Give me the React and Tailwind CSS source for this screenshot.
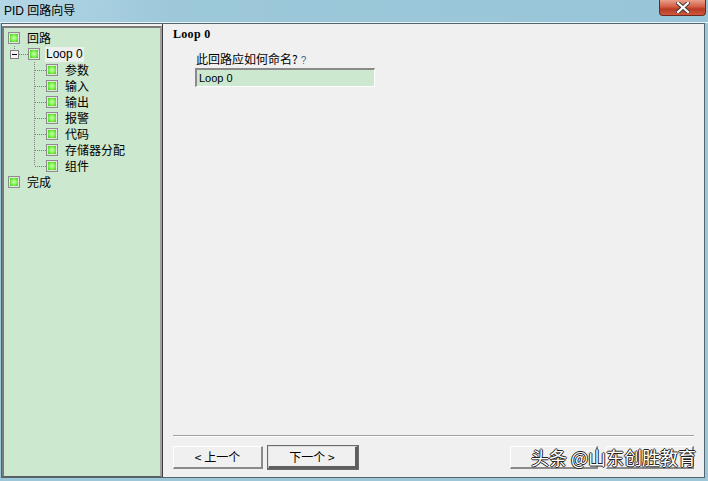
import React from "react";

const Check = () => (
  <span className="w-[12px] h-[12px] shrink-0 border border-[#8c8c8c] bg-[#e6e6e6] p-[1px] flex">
    <span className="flex-1 bg-[radial-gradient(circle,#caffb4_0%,#7cf04a_55%,#34c814_100%)]" />
  </span>
);

// dotted connector for child nodes
const Branch = ({ last }) => (
  <svg width="12" height="16" className="shrink-0" shapeRendering="crispEdges">
    <line x1="0.5" y1="0" x2="0.5" y2={last ? 8 : 16} stroke="#808080" strokeDasharray="1 1" />
    <line x1="1" y1="8.5" x2="12" y2="8.5" stroke="#808080" strokeDasharray="1 1" />
  </svg>
);

const children = ["参数", "输入", "输出", "报警", "代码", "存储器分配", "组件"];

const Tree = () => (
  <div className="w-[160px] mt-[2px] bg-[#cce8cf] border-t-2 border-l-2 border-[#7a7a7a] border-r-2 border-r-[#a0a0a0] border-b border-b-[#5a5a5a] pt-[2px] pl-[4px] text-[12px] text-black">
    <div className="h-[16px] flex items-center gap-[7px]">
      <Check />
      <span>回路</span>
    </div>
    <div className="h-[16px] flex items-center">
      <svg width="20" height="16" className="shrink-0" shapeRendering="crispEdges">
        <line x1="6.5" y1="0" x2="6.5" y2="4" stroke="#808080" strokeDasharray="1 1" />
        <rect x="2.5" y="4.5" width="8" height="8" fill="#f4f4f4" stroke="#808080" />
        <line x1="4" y1="8.5" x2="9" y2="8.5" stroke="#000" />
        <line x1="11" y1="8.5" x2="20" y2="8.5" stroke="#808080" strokeDasharray="1 1" />
      </svg>
      <Check />
      <span className="ml-[5px] px-[1px] bg-[#eef0ee] leading-[15px] font-['Liberation_Sans',sans-serif]">Loop 0</span>
    </div>
    <div className="flex flex-col">
      {children.map((name, i) => (
        <div key={name} className="h-[16px] flex items-center">
          <span className="w-[26px] shrink-0" />
          <Branch last={i === children.length - 1} />
          <Check />
          <span className="ml-[7px]">{name}</span>
        </div>
      ))}
    </div>
    <div className="h-[16px] flex items-center gap-[7px]">
      <Check />
      <span>完成</span>
    </div>
  </div>
);

const Button = ({ children, primary, w = "w-[90px]" }) => (
  <button
    className={
      primary
        ? `${w} h-[23px] bg-[#f0f0f0] border border-t-[#e0e0e0] border-l-[#e0e0e0] border-r-[3px] border-b-[3px] border-r-[#5e5e5e] border-b-[#5e5e5e] outline outline-1 outline-[#6a6a6a] text-[12px] text-black`
        : `${w} h-[23px] bg-[#f0f0f0] border border-t-white border-l-white border-r-2 border-b-2 border-r-[#8a8a8a] border-b-[#8a8a8a] text-[12px] text-black`
    }
  >
    {children}
  </button>
);

export default function App() {
  return (
    <div className="w-[708px] h-[481px] bg-[#9cc7d9] flex flex-col font-['Noto_Sans_CJK_SC',sans-serif] overflow-hidden">
      {/* title bar */}
      <div className="h-[23px] flex items-start bg-[linear-gradient(100deg,#b4d7e6_0%,#9cc8da_25%,#99c5d8_100%)] border-b border-b-[#e8f3f8]">
        <span className="ml-[4px] mt-[3px] text-[12px] leading-[16px] text-black font-['Liberation_Sans','Noto_Sans_CJK_SC',sans-serif]">
          PID 回路向导
        </span>
        <span className="ml-auto mr-[2px] w-[47px] h-[16px] rounded-b-[4px] border border-t-0 border-[#6b2a20] bg-[linear-gradient(#e9a08c_0%,#d45d45_45%,#b83a24_60%,#d0583e_100%)] flex items-center justify-center">
          <svg width="14" height="11" viewBox="0 0 14 11">
            <path d="M2 1 L12 10 M12 1 L2 10" stroke="#3a3a3a" strokeWidth="4" strokeLinecap="square" />
            <path d="M2 1 L12 10 M12 1 L2 10" stroke="#ffffff" strokeWidth="2.2" strokeLinecap="square" />
          </svg>
        </span>
      </div>

      {/* client area */}
      <div className="flex-1 flex mx-[1px] mr-[3px] mb-[3px] bg-[#f0f0f0] border border-[#53666f]">
        <Tree />
        <div className="flex-1 flex flex-col border-l border-[#3c3c3c] pl-[10px] pr-[10px] relative">
          <div className="mt-[3px] text-[12px] leading-[14px] font-bold font-['Liberation_Serif',serif] tracking-[0.3px] text-black">
            Loop 0
          </div>
          <div className="ml-[23px] mt-[11px] text-[12px] leading-[14px] text-black flex items-baseline">
            此回路应如何命名?
            <span className="ml-[3px] text-[10px] text-[#3b6b8c] font-['Liberation_Sans',sans-serif]">?</span>
          </div>
          <div className="ml-[22px] w-[180px] h-[19px] bg-[#cce8cf] border border-t-2 border-l-2 border-t-[#8a8a8a] border-l-[#8a8a8a] border-r-white border-b-white flex items-center pl-[2px] text-[11px] text-black font-['Liberation_Sans',sans-serif]">
            Loop 0
          </div>

          <div className="flex-1" />

          <div className="border-t border-[#a0a0a0] border-b border-b-white" />
          <div className="mt-[9px] mb-[8px] flex items-center">
            <Button>&lt; 上一个</Button>
            <span className="w-[5px]" />
            <Button primary>下一个 &gt;</Button>
            <span className="flex-1" />
            <Button w="w-[88px]">&nbsp;</Button>
            <span className="w-[8px]" />
            <Button w="w-[88px]">&nbsp;</Button>
          </div>
          {/* watermark */}
          <span className="absolute right-[8px] bottom-[10px] text-[18px] leading-[20px] text-white [text-shadow:1px_0_#222,-1px_0_#222,0_1px_#222,0_-1px_#222]">
            头条 @山东创胜教育
          </span>
        </div>
      </div>
    </div>
  );
}
